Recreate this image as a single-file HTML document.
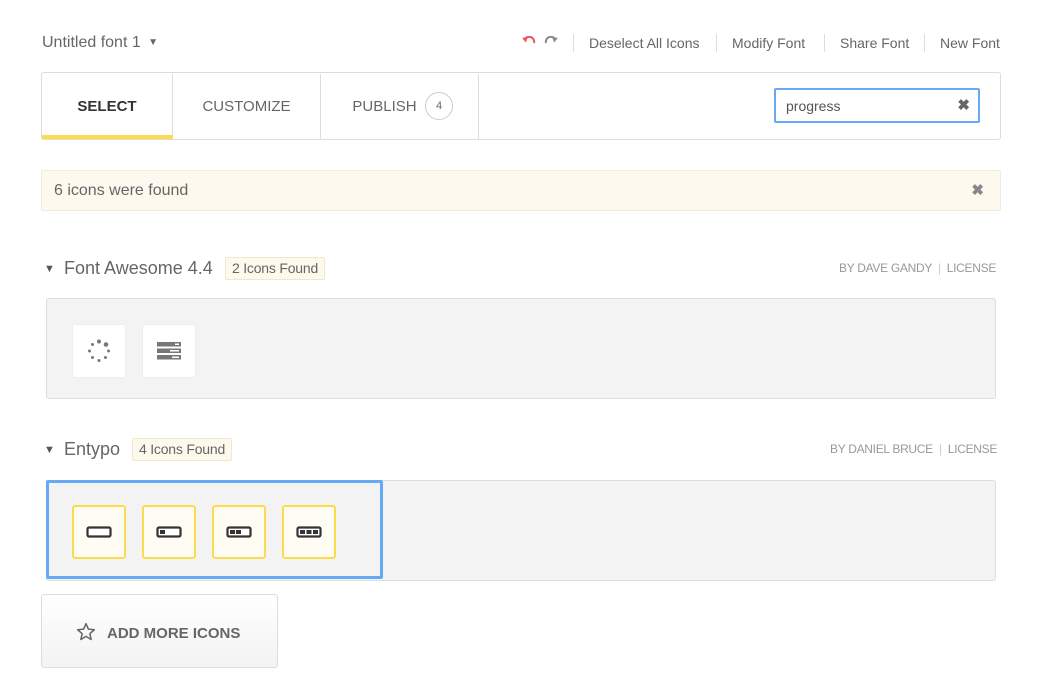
<!DOCTYPE html>
<html><head><meta charset="utf-8"><style>
*{box-sizing:border-box;margin:0;padding:0}
body{width:1047px;height:686px;background:#fff;font-family:"Liberation Sans",sans-serif;color:#666;position:relative;overflow:hidden}
.a{position:absolute}
.link{font-size:14px;color:#666;top:35px}
.sep{top:34px;width:1px;height:18px;background:#ddd}
.tabs{left:41px;top:72px;width:960px;height:68px;border:1px solid #ddd;border-radius:3px}
.tab{position:absolute;top:1px;height:66px;line-height:66px;text-align:center;font-size:15px;color:#666;border-right:1px solid #ddd}
.panel{left:46px;width:950px;height:101px;background:#f3f3f3;border:1px solid #ddd;border-radius:3px}
.tile{position:absolute;width:54px;height:54px;background:#fff;border-radius:3px;border:1px solid #eee;display:flex;align-items:center;justify-content:center}
.ytile{background:#fffcf4;border:2px solid #fcdc4d}
.h{font-size:18px;color:#666}
.badge{font-size:14px;color:#666;background:#fdf9ec;border:1px solid #f0e8cc;border-radius:2px;height:23px;line-height:21px;padding:0 5px;width:100px;text-align:center;letter-spacing:-0.2px}
.by{font-size:12px;color:#999;letter-spacing:-0.3px}
</style></head><body>
<div class="a" style="left:42px;top:34px;font-size:16px;color:#666">Untitled font 1 <span style="font-size:10px;position:relative;top:-2px;margin-left:3px">▼</span></div>

<svg class="a" style="left:522px;top:36px" width="14" height="12" viewBox="0 0 14 12"><path d="M3 3 A5 5 0 0 1 12 7" fill="none" stroke="#f0505a" stroke-width="2"/><path d="M0 3 L5 0 L5 6 Z" fill="#f0505a" transform="rotate(20 3 3)"/></svg>
<svg class="a" style="left:544px;top:36px" width="14" height="12" viewBox="0 0 14 12"><path d="M11 3 A5 5 0 0 0 2 7" fill="none" stroke="#888" stroke-width="2"/><path d="M14 3 L9 0 L9 6 Z" fill="#888" transform="rotate(-20 11 3)"/></svg>
<div class="a sep" style="left:573px"></div>
<div class="a link" style="left:589px">Deselect All Icons</div>
<div class="a sep" style="left:716px"></div>
<div class="a link" style="left:732px">Modify Font</div>
<div class="a sep" style="left:824px"></div>
<div class="a link" style="left:840px">Share Font</div>
<div class="a sep" style="left:924px"></div>
<div class="a link" style="left:940px">New Font</div>

<div class="a tabs">
 <div class="tab" style="left:0;width:131px;color:#333;font-weight:600;font-size:15px">SELECT</div>
 <div class="a" style="left:0;top:62px;width:131px;height:4px;background:#fcdc4d"></div>
 <div class="tab" style="left:131px;width:148px">CUSTOMIZE</div>
 <div class="tab" style="left:279px;width:158px;padding-right:30px">PUBLISH</div>
 <div class="a" style="left:383px;top:19px;width:28px;height:28px;border:1px solid #ccc;border-radius:50%;font-size:11px;line-height:26px;text-align:center;color:#666">4</div>
 <div class="a" style="left:732px;top:15px;width:206px;height:35px;border:2px solid #66aaf5;border-radius:2px;background:#fff">
  <span class="a" style="left:10px;top:8px;font-size:14px;color:#555">progress</span>
  <span class="a" style="right:8px;top:6px;font-size:15px;color:#666;font-weight:bold">✖</span>
 </div>
</div>

<div class="a" style="left:41px;top:170px;width:960px;height:41px;background:#fdf9ef;border:1px solid #f0ebdc;border-radius:2px">
 <span class="a" style="left:12px;top:11px;font-size:16px;color:#666">6 icons were found</span>
 <span class="a" style="right:16px;top:10px;font-size:15px;color:#888;font-weight:bold">✖</span>
</div>

<div class="a" style="left:44px;top:263px;font-size:11px;color:#555">▼</div>
<div class="a h" style="left:64px;top:258px">Font Awesome 4.4</div>
<div class="a badge" style="left:225px;top:257px">2 Icons Found</div>
<div class="a by" style="left:839px;top:261px">BY DAVE GANDY &nbsp;<span style="color:#ccc">|</span>&nbsp; LICENSE</div>

<div class="a panel" style="top:298px">
 <div class="tile" style="left:25px;top:25px"><svg width="24" height="24" viewBox="0 0 24 24" fill="#777"><circle cx="12" cy="2.5" r="2"/><circle cx="19" cy="5.5" r="2.3"/><circle cx="21.5" cy="12" r="1.5"/><circle cx="18.5" cy="18.5" r="1.5"/><circle cx="12" cy="21.5" r="1.5"/><circle cx="5.5" cy="18.5" r="1.5"/><circle cx="2.5" cy="12" r="1.5"/><circle cx="5.5" cy="5.5" r="1.5"/></svg></div>
 <div class="tile" style="left:95px;top:25px"><svg width="24" height="20" viewBox="0 0 24 20"><rect x="0" y="1" width="24" height="4.5" fill="#777"/><rect x="0" y="7.5" width="24" height="4.5" fill="#777"/><rect x="0" y="14" width="24" height="4.5" fill="#777"/><rect x="18" y="2.5" width="4" height="1.5" fill="#fff"/><rect x="13" y="9" width="9" height="1.5" fill="#fff"/><rect x="15" y="15.5" width="7" height="1.5" fill="#fff"/></svg></div>
</div>

<div class="a" style="left:44px;top:444px;font-size:11px;color:#555">▼</div>
<div class="a h" style="left:64px;top:439px">Entypo</div>
<div class="a badge" style="left:132px;top:438px">4 Icons Found</div>
<div class="a by" style="left:830px;top:442px">BY DANIEL BRUCE &nbsp;<span style="color:#ccc">|</span>&nbsp; LICENSE</div>

<div class="a panel" style="top:480px"></div>
<div class="a" style="left:46px;top:480px;width:337px;height:99px;border:3px solid #66aaf5;border-radius:2px">
 <div class="tile ytile" style="left:23px;top:22px"><svg width="26" height="12" viewBox="0 0 26 12"><rect x="1.5" y="1.5" width="23" height="9" rx="1.5" fill="#fff" stroke="#333" stroke-width="2.2"/></svg></div>
 <div class="tile ytile" style="left:93px;top:22px"><svg width="26" height="12" viewBox="0 0 26 12"><rect x="1.5" y="1.5" width="23" height="9" rx="1.5" fill="#fff" stroke="#333" stroke-width="2.2"/><rect x="4" y="4" width="5" height="4" fill="#333"/></svg></div>
 <div class="tile ytile" style="left:163px;top:22px"><svg width="26" height="12" viewBox="0 0 26 12"><rect x="1.5" y="1.5" width="23" height="9" rx="1.5" fill="#fff" stroke="#333" stroke-width="2.2"/><rect x="4" y="4" width="5" height="4" fill="#333"/><rect x="10" y="4" width="5" height="4" fill="#333"/></svg></div>
 <div class="tile ytile" style="left:233px;top:22px"><svg width="26" height="12" viewBox="0 0 26 12"><rect x="1.5" y="1.5" width="23" height="9" rx="1.5" fill="#fff" stroke="#333" stroke-width="2.2"/><rect x="4" y="4" width="5" height="4" fill="#333"/><rect x="10.5" y="4" width="5" height="4" fill="#333"/><rect x="17" y="4" width="5" height="4" fill="#333"/></svg></div>
</div>

<div class="a" style="left:41px;top:594px;width:237px;height:74px;border:1px solid #ddd;border-radius:3px;background:linear-gradient(#fff,#f3f3f3)">
 <svg class="a" style="left:34px;top:27px" width="20" height="20" viewBox="0 0 24 24"><path d="M12 2 L14.9 8.6 L22 9.3 L16.6 14 L18.2 21 L12 17.3 L5.8 21 L7.4 14 L2 9.3 L9.1 8.6 Z" fill="none" stroke="#666" stroke-width="1.8" stroke-linejoin="round"/></svg>
 <span class="a" style="left:65px;top:30px;font-size:15px;font-weight:bold;color:#666">ADD MORE ICONS</span>
</div>
</body></html>
